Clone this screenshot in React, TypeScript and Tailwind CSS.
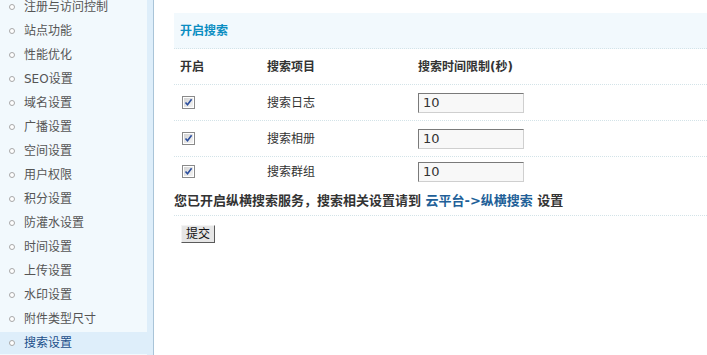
const menu = [
  '注册与访问控制',
  '站点功能',
  '性能优化',
  'SEO设置',
  '域名设置',
  '广播设置',
  '空间设置',
  '用户权限',
  '积分设置',
  '防灌水设置',
  '时间设置',
  '上传设置',
  '水印设置',
  '附件类型尺寸',
  '搜索设置',
];

const rows = [
  { name: '搜索日志', value: '10' },
  { name: '搜索相册', value: '10' },
  { name: '搜索群组', value: '10' },
];

function CheckBox() {
  return (
    <svg width="13" height="13" viewBox="0 0 13 13" className="block">
      <defs>
        <linearGradient id="cbg" x1="0" y1="0" x2="1" y2="1">
          <stop offset="0" stopColor="#d4d4d4" />
          <stop offset="1" stopColor="#f4f4f4" />
        </linearGradient>
      </defs>
      <rect x="0.5" y="0.5" width="12" height="12" fill="#fff" stroke="#8a8a8a" />
      <rect x="2" y="2" width="9" height="9" fill="url(#cbg)" />
      <path d="M3.5 6.5 L5.5 8.8 L9.6 3.2" fill="none" stroke="#2b4e9e" strokeWidth="1.6" />
    </svg>
  );
}

export default function App() {
  return (
    <div
      className="flex h-screen w-full overflow-hidden bg-white text-[12px] text-[#333]"
      style={{ fontFamily: '"DejaVu Sans", "Noto Sans CJK SC", sans-serif' }}
    >
      <div className="w-[147px] shrink-0 bg-[#f2f9fd]">
        <ul className="mt-[-4px]">
          {menu.map((m) => {
            const active = m === '搜索设置';
            return (
              <li
                key={m}
                className={
                  'mb-[2px] flex h-[22px] items-center pl-[9px] ' +
                  (active ? 'bg-[#deeefa] text-[#1b4f8a]' : 'text-[#555]')
                }
              >
                <span className="mr-[9px] h-[6px] w-[6px] rounded-full border border-[#a8a8a8] bg-white" />
                <span className="leading-[22px]">{m}</span>
              </li>
            );
          })}
        </ul>
      </div>
      <div className="w-[6px] shrink-0 bg-[#deeefa]" />
      <div className="w-px shrink-0 bg-[#a9c4d8]" />

      <div className="flex-1 pl-[20px] pt-[13px]">
        <div className="box-border flex h-[36px] items-center border-b border-dotted border-[#d3e3e8] bg-[#f2f9fd] px-[6px]">
          <span className="font-bold text-[#0b8ec2]">开启搜索</span>
        </div>

        <div className="box-border grid h-[36px] grid-cols-[87px_151px_1fr] items-center border-b border-dotted border-[#d3e3e8] font-bold text-[#333]">
          <div className="px-[6px]">开启</div>
          <div className="px-[6px]">搜索项目</div>
          <div className="px-[6px]">搜索时间限制(秒)</div>
        </div>

        {rows.map((r, i) => (
          <div
            key={r.name}
            className={
              'box-border grid grid-cols-[87px_151px_1fr] items-center ' +
              (i < rows.length - 1
                ? 'h-[36px] border-b border-dotted border-[#d3e3e8]'
                : 'h-[29px]')
            }
          >
            <div className="pl-[8px]">
              <CheckBox />
            </div>
            <div className="px-[6px]">{r.name}</div>
            <div className="px-[6px]">
              <input
                defaultValue={r.value}
                className="box-border h-[20px] w-[106px] border border-b-[#cfcfcf] border-l-[#7a7a7a] border-r-[#cfcfcf] border-t-[#7a7a7a] bg-[#f8f8f8] px-[4px] text-[13px] text-[#333] outline-none"
              />
            </div>
          </div>
        ))}

        <div className="box-border flex h-[30px] items-center border-b border-dotted border-[#d3e3e8] text-[13px] font-bold text-[#333]">
          您已开启纵横搜索服务，搜索相关设置请到&nbsp;
          <span className="text-[#215f98]">云平台-&gt;纵横搜索</span>
          &nbsp;设置
        </div>

        <div className="mt-[9px] pl-[7px]">
          <button className="box-border flex h-[18px] w-[34px] items-center justify-center border border-b-[#5a5a5a] border-l-[#f4f4f4] border-r-[#5a5a5a] border-t-[#f4f4f4] bg-[#e6e6e6] text-[12px] text-[#111]">
            提交
          </button>
        </div>
      </div>
    </div>
  );
}
